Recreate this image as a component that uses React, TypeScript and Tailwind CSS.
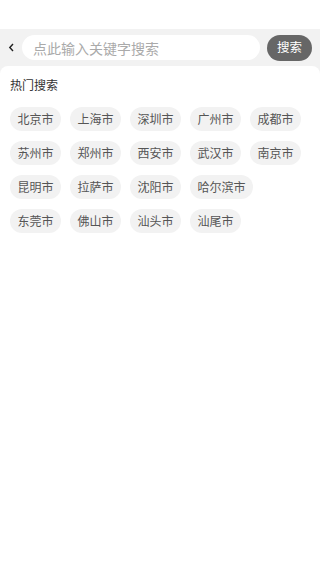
import React from "react";

const rows = [
  ["北京市", "上海市", "深圳市", "广州市", "成都市"],
  ["苏州市", "郑州市", "西安市", "武汉市", "南京市"],
  ["昆明市", "拉萨市", "沈阳市", "哈尔滨市"],
  ["东莞市", "佛山市", "汕头市", "汕尾市"],
];

export default function App() {
  const font = { fontFamily: '"Noto Sans CJK SC", "Noto Sans", sans-serif' };
  return (
    <div className="w-[320px] h-[569px] bg-white flex flex-col" style={font}>
      <div className="h-[29px] bg-white" />
      <div className="bg-[#f2f2f2] flex-1 flex flex-col">
        <div className="flex items-center h-[37px] pt-[6px] pb-[6px]">
          <div className="w-[22px] flex justify-center items-center">
            <svg width="7" height="9" viewBox="0 0 7 9">
              <path d="M5 1 L1.8 4.5 L5 8" fill="none" stroke="#222" strokeWidth="1.4" />
            </svg>
          </div>
          <div className="w-[238px] h-[25px] bg-white rounded-full flex items-center pl-[11px] text-[14px] text-[#aaa] leading-none">
            点此输入关键字搜索
          </div>
          <div className="ml-[7px] w-[45px] h-[26px] bg-[#666] rounded-full flex items-center justify-center text-white text-[12.5px] leading-none">
            搜索
          </div>
        </div>
        <div className="flex-1 bg-white rounded-t-[8px] pt-[12px] px-[10px]">
          <div className="text-[12px] text-[#333] leading-[14px]">热门搜索</div>
          <div className="mt-[15px] flex flex-col gap-[10px]">
            {rows.map((r, i) => (
              <div key={i} className="flex gap-[9px]">
                {r.map((c) => (
                  <div
                    key={c}
                    className="h-[24px] px-[7.5px] rounded-full bg-[#f2f2f2] text-[12px] text-[#555] flex items-center justify-center leading-none"
                  >
                    {c}
                  </div>
                ))}
              </div>
            ))}
          </div>
        </div>
      </div>
    </div>
  );
}
